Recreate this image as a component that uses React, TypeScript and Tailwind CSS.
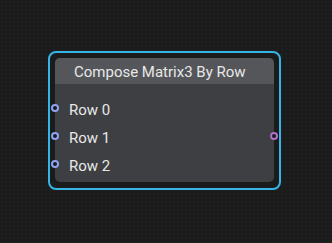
import React from 'react';

function Port({ color, className }: { color: string; className: string }) {
  return (
    <span
      className={`absolute w-[8px] h-[8px] rounded-full border-2 bg-[#1a1a1e] ${color} ${className}`}
    />
  );
}

const rows = ['Row 0', 'Row 1', 'Row 2'];

export default function App() {
  return (
    <div
      className="w-[332px] h-[243px] bg-[#1b1b1b] bg-[radial-gradient(#202020_1px,transparent_1px)] bg-size-[4px_4px] pl-[48px] pt-[51px] overflow-hidden"
      style={{ fontFamily: 'Roboto, "Liberation Sans", sans-serif' }}
    >
      <div className="w-[233px] h-[139px] border-2 border-[#35b4e6] rounded-[8px] p-[5px] bg-[#1b1b1b]">
        <div className="relative w-[219px] h-[124px] rounded-[5px] bg-[#3e3f42] flex flex-col">
          <div className="h-[26px] shrink-0 bg-[#55565a] rounded-t-[5px] flex items-center pl-[19px] pt-[2px] text-[15px] text-[#e8e8e8]">
            Compose Matrix3 By Row
          </div>
          <div className="relative flex-1 flex flex-col pt-[12px]">
            {rows.map((r) => (
              <div key={r} className="relative h-[28px] flex items-center pl-[14px] text-[15px] text-[#e8e8e8]">
                <Port color="border-[#8fa3f2]" className="left-[-4px] top-[8px]" />
                {r}
              </div>
            ))}
            <Port color="border-[#b26fc4]" className="right-[-4px] top-[48px]" />
          </div>
        </div>
      </div>
    </div>
  );
}
